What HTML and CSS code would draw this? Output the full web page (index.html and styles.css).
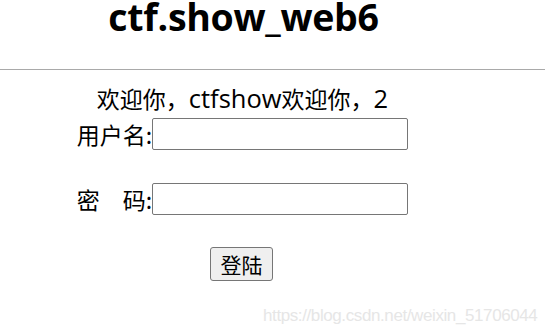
FILE: index.html
```html
<!DOCTYPE html>
<html>
<head>
<meta charset="utf-8">
<link rel="stylesheet" href="styles.css">
</head>
<body>
<div class="head">
  <h1 class="title">ctf.show_web6</h1>
</div>
<hr class="rule">
<div class="page">
  <p class="welcome">欢迎你，<span class="latin">ctfshow</span>欢迎你，<span class="latin">2</span></p>
  <form class="form">
    <div class="row"><span class="label">用户名:</span><input class="field" type="text"></div>
    <div class="row"><span class="label">密　码:</span><input class="field" type="password"></div>
    <div class="row btn-row"><button class="btn" type="button">登陆</button></div>
  </form>
</div>
<div class="watermark">https://blog.csdn.net/weixin_51706044</div>
</body>
</html>
```
FILE: styles.css
```css
html, body {
  margin: 0;
  padding: 0;
  background: #fff;
}
body {
  width: 545px;
  height: 334px;
  position: relative;
  overflow: hidden;
  font-family: "Noto Sans CJK SC", "Noto Sans", sans-serif;
  color: #000;
}
.head {
  width: 487px;
  text-align: center;
}
.title {
  margin: 0;
  padding-top: 0;
  font-family: "Open Sans", "Noto Sans", sans-serif;
  font-weight: 700;
  font-size: 37.5px;
  line-height: 34px;
  letter-spacing: -0.3px;
}
.rule {
  margin: 35px 0 0 0;
  border: 0;
  border-top: 1px solid #a9a9a9;
  height: 0;
}
.page {
  width: 485px;
  text-align: center;
  font-size: 23px;
}
.welcome {
  margin: 12px 0 0 0;
  line-height: 32px;
  height: 36px;
  white-space: nowrap;
}
.latin {
  font-family: "Open Sans", "Noto Sans", sans-serif;
  font-size: 25.5px;
}
.form {
  display: flex;
  flex-direction: column;
  align-items: center;
  gap: 33px;
}
.row {
  display: flex;
  align-items: center;
  height: 32px;
}
.label {
  line-height: 32px;
}
.field {
  box-sizing: border-box;
  width: 256px;
  height: 32px;
  margin: 0;
  border: 1px solid #767676;
  border-radius: 2px;
  padding: 0 4px;
  font-size: 20px;
}
.btn-row {
  height: 34px;
  margin-top: -1px;
}
.btn {
  box-sizing: border-box;
  width: 63px;
  height: 34px;
  margin: 0 0 0 -2px;
  padding: 0;
  background: #efefef;
  border: 1px solid #767676;
  border-radius: 3px;
  font-family: "Noto Sans CJK SC", sans-serif;
  font-size: 21px;
  line-height: 30px;
  color: #000;
}
.watermark {
  position: absolute;
  left: 263px;
  top: 306px;
  font-family: "Liberation Sans", Arial, sans-serif;
  font-size: 17px;
  color: #e6e6e6;
  letter-spacing: -0.4px;
}
```
